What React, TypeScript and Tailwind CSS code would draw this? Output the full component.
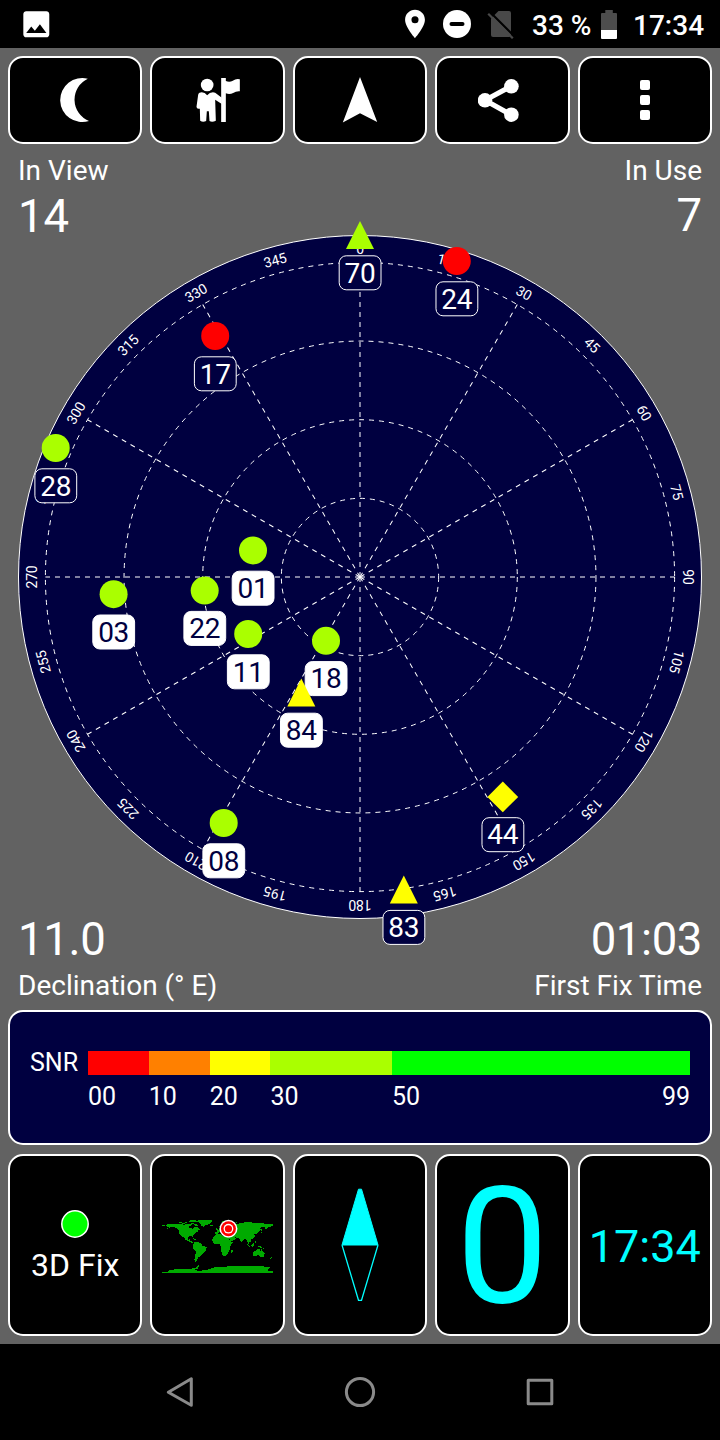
import React from "react";

type Shape = "circle" | "triangle" | "diamond";

interface Satellite {
  id: string;
  x: number;
  y: number;
  color: string;
  shape?: Shape;
  used?: boolean;
}

// Center of the sky view inside its 720x850 canvas
const CX = 360;
const CY = 425;
const HORIZON = 314.6;

const LIME = "#aaff00";
const NAVY = "#000040";

const satellites: Satellite[] = [
  { id: "70", x: 360, y: 83, color: LIME, shape: "triangle" },
  { id: "24", x: 456.8, y: 109, color: "#ff0000" },
  { id: "17", x: 215.2, y: 184, color: "#ff0000" },
  { id: "28", x: 55.7, y: 296, color: LIME },
  { id: "01", x: 253, y: 398.4, color: LIME, used: true },
  { id: "22", x: 204.7, y: 438.6, color: LIME, used: true },
  { id: "03", x: 113.6, y: 442.2, color: LIME, used: true },
  { id: "11", x: 248.2, y: 482, color: LIME, used: true },
  { id: "18", x: 326, y: 488.8, color: LIME, used: true },
  { id: "84", x: 301.3, y: 540.4, color: "#ffff00", shape: "triangle", used: true },
  { id: "08", x: 223.7, y: 671, color: LIME, used: true },
  { id: "44", x: 502.8, y: 644.9, color: "#ffff00", shape: "diamond" },
  { id: "83", x: 403.8, y: 737.6, color: "#ffff00", shape: "triangle" },
];

const snrBands = [
  { from: "00", span: 10, color: "#ff0000" },
  { from: "10", span: 10, color: "#ff8000" },
  { from: "20", span: 10, color: "#ffff00" },
  { from: "30", span: 20, color: LIME },
  { from: "50", span: 49, color: "#00ff00" },
];

// Coastlines as lon,-lat pairs
const land = [
  // North America
  "-168,-66 -156,-71 -128,-70 -110,-68 -95,-69 -85,-69 -81,-67 -87,-64 -94,-60 -92,-57 -82,-55 -80,-51 -78,-55 -77,-62 -70,-61 -64,-59 -60,-55 -56,-52 -65,-50 -61,-46 -70,-43 -74,-40 -76,-35 -81,-31 -80,-26 -82,-28 -85,-30 -94,-29 -97,-26 -97,-21 -94,-18 -91,-21 -87,-21 -89,-16 -83,-15 -83,-10 -77,-9 -78,-6 -85,-9 -92,-13 -97,-15 -105,-19 -108,-25 -113,-31 -110,-23 -116,-29 -121,-34 -124,-40 -124,-47 -130,-54 -138,-59 -148,-61 -158,-56 -165,-54 -157,-59 -165,-62",
  "-180,-68 -172,-67 -170,-65 -180,-65",
  // Greenland and the arctic islands
  "-73,-78 -60,-82 -30,-83 -15,-81 -20,-74 -25,-70 -38,-66 -44,-60 -52,-65 -54,-70 -60,-76",
  "-88,-74 -80,-73 -70,-70 -62,-66 -66,-62 -74,-65 -74,-68 -84,-71",
  "-117,-73 -105,-73 -102,-69 -116,-69",
  "-92,-80 -86,-82 -65,-83 -78,-76 -90,-76",
  "-125,-75 -116,-75 -122,-72",
  "-110,-77 -96,-77 -98,-74 -108,-75",
  // Caribbean
  "-84,-22 -78,-23 -70,-19 -70,-17 -78,-20",
  // South America
  "-77,-8 -72,-12 -62,-10 -52,-5 -50,0 -44,2 -35,6 -37,12 -39,18 -48,26 -53,33 -57,37 -62,39 -65,43 -67,48 -69,52 -68,55 -73,53 -75,47 -73,38 -71,28 -70,18 -76,14 -81,5 -80,-1",
  // Africa
  "-16,-15 -17,-21 -10,-30 -6,-36 10,-37 11,-33 20,-31 32,-31 35,-27 38,-18 43,-12 51,-12 49,-7 41,2 40,12 35,22 32,28 26,34 18,35 14,26 12,15 13,8 9,1 9,-4 4,-6 -8,-4 -13,-9",
  "44,17 50,14 49,20 46,26 43,23",
  // Eurasia
  "-9,-43 -9,-37 -1,-37 3,-42 9,-44 16,-38 18,-41 13,-45 20,-41 23,-36 26,-40 28,-37 36,-36 35,-31 39,-21 43,-13 53,-17 60,-22 56,-26 50,-30 58,-26 67,-25 72,-20 77,-8 80,-15 89,-22 94,-17 98,-10 103,-1 102,-8 100,-13 106,-9 109,-13 107,-20 117,-23 122,-30 119,-37 126,-39 127,-35 130,-37 128,-41 139,-48 141,-53 136,-55 143,-59 155,-60 156,-52 162,-57 164,-61 178,-62 180,-65 180,-69 160,-70 140,-73 113,-74 105,-78 87,-75 70,-73 68,-69 55,-69 44,-67 34,-67 41,-68 25,-71 14,-68 5,-61 8,-58 16,-56 20,-55 10,-54 3,-51 -4,-48 -1,-44",
  "-5,-50 1,-52 -3,-58 -6,-57 -3,-54",
  "-10,-52 -6,-52 -6,-55 -10,-54",
  "-24,-66 -14,-66 -18,-63 -22,-64",
  "12,-80 26,-80 16,-77",
  "54,-71 60,-75 68,-77 60,-73",
  // Japan, south east Asia
  "130,-32 140,-36 141,-45 145,-43 141,-39 138,-35",
  "142,-54 144,-50 142,-46",
  "95,-5 99,-3 106,4 105,6 100,1",
  "106,7 115,8 114,9 106,8",
  "109,-2 117,-7 119,-2 116,4 110,3",
  "120,-1 125,-2 122,1 123,5 120,5",
  "120,-18 122,-18 126,-8 122,-8 121,-13",
  "131,1 138,2 148,8 150,11 143,9 138,8 133,4",
  "80,-10 82,-7 80,-6",
  // Australia, New Zealand
  "114,22 122,18 130,12 136,12 137,17 141,17 142,11 146,19 153,26 152,33 149,38 142,38 136,35 131,31 124,34 115,35",
  "145,41 148,41 147,44",
  "173,35 178,38 174,41 173,38",
  "172,41 174,42 167,46 167,45",
  // Antarctica
  "-180,86 -158,85 -158,81 -145,79 -120,76 -100,76 -75,75 -63,66 -57,63 -61,68 -62,75 -75,80 -60,83 -40,81 -30,78 -15,73 0,70 30,69 50,67 80,68 110,66 140,67 160,70 170,72 163,78 165,83 180,85 180,90 -180,90",
];

function StatusBar() {
  return (
    <header className="flex h-12 items-center bg-black pl-[19px] pr-4 text-[28px] font-medium text-white">
      <svg width="34.6" height="34.6" viewBox="0 0 24 24" fill="#fff">
        <path d="M21 19V5c0-1.1-.9-2-2-2H5c-1.1 0-2 .9-2 2v14c0 1.1.9 2 2 2h14c1.1 0 2-.9 2-2zM8.5 13.5l2.5 3.01L14.5 12l4.5 6H5l3.5-4.5z" />
      </svg>
      <svg className="ml-auto" width="34" height="34" viewBox="0 0 24 24" fill="#fff">
        <path d="M12 2C8.130 2 5 5.130 5 9c0 5.250 7 13 7 13s7-7.750 7-13c0-3.870-3.130-7-7-7zm0 9.500a2.500 2.500 0 0 1 0-5 2.500 2.500 0 0 1 0 5z" />
      </svg>
      <svg className="ml-[11px]" width="28" height="28" viewBox="0 0 28 28">
        <circle cx="14" cy="14" r="14" fill="#fff" />
        <rect x="6.500" y="12" width="15" height="4" rx="2" fill="#000" />
      </svg>
      <svg className="ml-[16px]" width="27" height="30" viewBox="0 0 27 30">
        <path d="M11.500 2H22a2 2 0 0 1 2 2v22a2 2 0 0 1-2 2H6a2 2 0 0 1-2-2V9.500z" fill="#494949" />
        <path d="M2.500 2.500 27 27" stroke="#000" strokeWidth="2.200" />
        <path d="M1.200 4.700 25.800 29.300" stroke="#494949" strokeWidth="2.200" />
      </svg>
      <span className="ml-[18px] w-[61px] whitespace-nowrap pt-[3px] leading-[50px]">33 %</span>
      <svg className="ml-2" width="16" height="29" viewBox="0 0 16 29">
        <path d="M4.300 0h7.500v3H15a1 1 0 0 1 1 1v16H0V4a1 1 0 0 1 1-1h3.300z" fill="#4d4d4d" />
        <path d="M0 20h16v8a1 1 0 0 1-1 1H1a1 1 0 0 1-1-1z" fill="#fff" />
      </svg>
      <span className="ml-4 w-[71px] whitespace-nowrap pt-[3px] leading-[50px]">17:34</span>
    </header>
  );
}

function Card({ className, children }: { className: string; children: React.ReactNode }) {
  return (
    <div className={`flex items-center justify-center rounded-[15px] border-2 border-white bg-black ${className}`}>
      {children}
    </div>
  );
}

function Toolbar() {
  return (
    <div className="grid grid-cols-5 gap-2 px-2 pt-2">
      <Card className="h-[88px]">
        <svg width="48" height="48" viewBox="0 0 48 48" fill="#fff">
          <path d="M36.200 2.600A22 22 0 1 0 37.400 44.800A23 23 0 0 1 36.200 2.600Z" transform="translate(.6 .2)" />
        </svg>
      </Card>
      <Card className="h-[88px]">
        <svg width="48" height="48" viewBox="577.500 228 144 144" fill="#fff">
          <circle cx="617" cy="255" r="19" />
          <path d="M594 278Q608 274 617 286Q627 274 641 278L661 293V312L641 299L643 362Q632 368 624 363L622 334H616L614 363Q604 368 596 362L595 326Q585 328 585 320L590 284Q591 279 594 278Z" />
          <path d="M659 234H673V243Q684 248 694 242Q704 235 715 238V274Q704 273 695 279Q684 285 673 280V366H659Z" />
        </svg>
      </Card>
      <Card className="h-[88px]">
        <svg width="48" height="48" viewBox="0 0 48 48" fill="#fff">
          <path d="M24 1 41.200 46 24 37.300 6.800 46.500Z" />
        </svg>
      </Card>
      <Card className="h-[88px]">
        <svg width="48" height="48" viewBox="0 0 48 48" fill="#fff">
          <path d="M33 10.300 7 24.300 33 38.700" fill="none" stroke="#fff" strokeWidth="5" />
          <circle cx="7" cy="24.300" r="7.300" />
          <circle cx="33.400" cy="10.300" r="7.300" />
          <circle cx="33.400" cy="38.700" r="7.300" />
        </svg>
      </Card>
      <Card className="h-[88px] flex-col gap-[5px]">
        <span className="size-2.5 rounded-xs bg-white" />
        <span className="size-2.5 rounded-xs bg-white" />
        <span className="size-2.5 rounded-xs bg-white" />
      </Card>
    </div>
  );
}

function Marker({ sat }: { sat: Satellite }) {
  return (
    <g transform={`translate(${sat.x} ${sat.y})`}>
      {sat.shape === "triangle" ? (
        <path d="M0 -14 14 14H-14Z" fill={sat.color} />
      ) : sat.shape === "diamond" ? (
        <path d="M0 -15.400 15.400 0 0 15.400 -15.400 0Z" fill={sat.color} />
      ) : (
        <circle r="14" fill={sat.color} />
      )}
      <rect
        x="-20.800"
        y="20.800"
        width="41.800"
        height="34"
        rx="7"
        fill={sat.used ? "#fff" : NAVY}
        stroke="#fff"
      />
      <text y="47.500" fontSize="28" textAnchor="middle" letterSpacing="-.3" fill={sat.used ? NAVY : "#fff"}>
        {sat.id}
      </text>
    </g>
  );
}

function SkyView() {
  const bearings = Array.from({ length: 24 }, (_, i) => i * 15);

  return (
    <svg className="absolute inset-0" width="720" height="850" viewBox="0 0 720 850">
      <circle cx={CX} cy={CY} r="341.500" fill={NAVY} stroke="#fff" />
      <g fill="none" stroke="#fff" strokeDasharray="5 5">
        {[1, 2, 3, 4].map(n => (
          <circle key={n} cx={CX} cy={CY} r={(HORIZON * n) / 4} />
        ))}
        {bearings.filter(b => b % 30 === 0).map(b => (
          <path key={b} d={`M${CX} ${CY}v-${HORIZON}`} transform={`rotate(${b} ${CX} ${CY})`} />
        ))}
      </g>
      {bearings.map(b => (
        <text
          key={b}
          x={CX}
          y={CY - 323}
          fontSize="14"
          letterSpacing="-.2"
          textAnchor="middle"
          fill="#fff"
          transform={`rotate(${b} ${CX} ${CY})`}
        >
          {b}
        </text>
      ))}
      {satellites.map(sat => (
        <Marker key={sat.id} sat={sat} />
      ))}
    </svg>
  );
}

function SkyPanel() {
  return (
    <section className="relative flex h-[850px] flex-col justify-between px-[18px] pt-[3px] text-white">
      <SkyView />
      <div className="relative flex justify-between">
        <div>
          <p className="text-[28px] leading-8">In View</p>
          <p className="mt-[5px] text-[45.500px] leading-[50px]">14</p>
        </div>
        <div className="text-right">
          <p className="text-[28px] leading-8">In Use</p>
          <p className="mt-1 text-[45.500px] leading-[50px]">7</p>
        </div>
      </div>
      <div className="relative flex justify-between">
        <div>
          <p className="text-[45.500px] leading-[50px] tracking-[-0.3px]">11.0</p>
          <p className="mt-[5px] text-[28px] leading-8">Declination (° E)</p>
        </div>
        <div className="text-right">
          <p className="text-[45.500px] leading-[50px] tracking-[-0.4px]">01:03</p>
          <p className="mt-[5px] text-[28px] leading-8">First Fix Time</p>
        </div>
      </div>
    </section>
  );
}

function SnrLegend() {
  return (
    <section className="mx-2 mt-2 flex h-[135px] rounded-[15px] border-2 border-white bg-[#000040] pl-5 pr-5 pt-[39px] text-[25px] text-white">
      <span className="w-[58px] leading-6">SNR</span>
      <div className="flex flex-1">
        {snrBands.map(band => (
          <div key={band.from} className="basis-0" style={{ flexGrow: band.span }}>
            <div className="h-6" style={{ background: band.color }} />
            <div className="mt-[7px] flex justify-between leading-[30px]">
              <span>{band.from}</span>
              {band.from === "50" && <span>99</span>}
            </div>
          </div>
        ))}
      </div>
    </section>
  );
}

function WorldMap() {
  return (
    <svg width="111" height="53" viewBox="-180 -83 360 173" preserveAspectRatio="none" className="mt-0.5 overflow-visible">
      <g fill="#00aa00" shapeRendering="crispEdges">
        {land.map(points => (
          <polygon key={points} points={points} />
        ))}
      </g>
      <g transform="translate(35.500 -54.500) scale(3.240)">
        <circle r="9" fill="#fff" />
        <circle r="7.500" fill="#f00" />
        <circle r="4.900" fill="#fff" />
        <circle r="3.600" fill="#f00" />
      </g>
    </svg>
  );
}

function Gauges() {
  return (
    <div className="grid grid-cols-5 gap-2 px-2 pt-[9px]">
      <Card className="h-[182px] flex-col pt-1 text-white">
        <svg width="28" height="28" viewBox="0 0 28 28">
          <circle cx="14" cy="14" r="13.200" fill="#00ff00" stroke="#fff" strokeWidth="1.500" />
        </svg>
        <p className="mt-[7px] text-[32px] leading-[40px]">3D Fix</p>
      </Card>
      <Card className="h-[182px]">
        <WorldMap />
      </Card>
      <Card className="h-[182px]">
        <svg width="40" height="114" viewBox="0 0 40 114" stroke="#00ffff">
          <path d="M18.500 1.200H21.500L38 57H2Z" fill="#00ffff" />
          <path d="M2 57 18.500 112.300H21.500L38 57" fill="none" strokeWidth="1.300" />
        </svg>
      </Card>
      <Card className="h-[182px]">
        <span className="pt-0.5 text-[164px] leading-[182px] text-[#00ffff]">0</span>
      </Card>
      <Card className="h-[182px]">
        <span className="mt-1 text-[45px] leading-[50px] text-[#00ffff]">17:34</span>
      </Card>
    </div>
  );
}

function NavBar() {
  return (
    <nav className="flex h-24 items-center justify-center gap-[148px] bg-black">
      <svg width="32" height="32" viewBox="0 0 32 32" fill="none" stroke="#8a8a8a" strokeWidth="3" strokeLinejoin="round">
        <path d="M4.300 16.200 27.300 2.800V29.300Z" />
      </svg>
      <svg width="32" height="32" viewBox="0 0 32 32" fill="none" stroke="#8a8a8a" strokeWidth="3">
        <circle cx="16" cy="16" r="13.600" />
      </svg>
      <svg width="32" height="32" viewBox="0 0 32 32" fill="none" stroke="#8a8a8a" strokeWidth="3" strokeLinejoin="round">
        <path d="M4.200 4.200H27.800V27.800H4.200Z" />
      </svg>
    </nav>
  );
}

export default function App() {
  return (
    <div className="flex h-[1440px] w-[720px] flex-col overflow-hidden bg-black font-['Roboto',sans-serif]">
      <StatusBar />
      <main className="h-[1296px] bg-[#626262]">
        <Toolbar />
        <div className="pt-2">
          <SkyPanel />
        </div>
        <SnrLegend />
        <Gauges />
      </main>
      <NavBar />
    </div>
  );
}
